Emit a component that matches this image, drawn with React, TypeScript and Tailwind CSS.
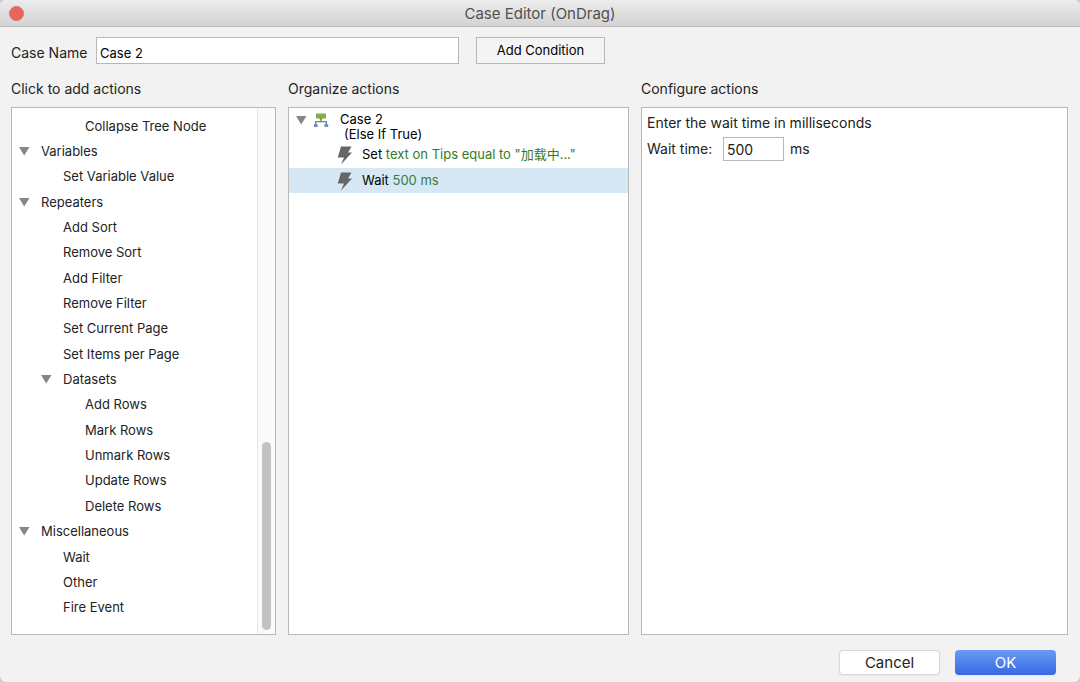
import { useState } from "react";

type Row = { label: string; level: 0 | 1 | 2; group?: boolean };

const rows: Row[] = [
  { label: "Collapse Tree Node", level: 2 },
  { label: "Variables", level: 0, group: true },
  { label: "Set Variable Value", level: 1 },
  { label: "Repeaters", level: 0, group: true },
  { label: "Add Sort", level: 1 },
  { label: "Remove Sort", level: 1 },
  { label: "Add Filter", level: 1 },
  { label: "Remove Filter", level: 1 },
  { label: "Set Current Page", level: 1 },
  { label: "Set Items per Page", level: 1 },
  { label: "Datasets", level: 1, group: true },
  { label: "Add Rows", level: 2 },
  { label: "Mark Rows", level: 2 },
  { label: "Unmark Rows", level: 2 },
  { label: "Update Rows", level: 2 },
  { label: "Delete Rows", level: 2 },
  { label: "Miscellaneous", level: 0, group: true },
  { label: "Wait", level: 1 },
  { label: "Other", level: 1 },
  { label: "Fire Event", level: 1 },
];

const indent = { 0: "pl-[7px]", 1: "pl-[29px]", 2: "pl-[51px]" };

function Triangle() {
  return (
    <svg viewBox="0 0 11 10" className="h-[10px] w-[11px] shrink-0" aria-hidden="true">
      <path d="M0 1H10.5L5.2 9.5Z" fill="#868686" />
    </svg>
  );
}

function CaseIcon() {
  return (
    <svg viewBox="0 0 16 15" className="h-[15px] w-4 shrink-0" aria-hidden="true">
      <path d="M3 0.5H13V5.5H10L8 7.5L6 5.5H3Z" fill="#86ad4e" />
      <path d="M8 6V8.5M2.7 12V8.7H13.3V12" fill="none" stroke="#748088" strokeWidth="1.3" />
      <rect x="0.8" y="11.2" width="3.8" height="2.8" fill="#688dbd" />
      <rect x="11.4" y="11.2" width="3.8" height="2.8" fill="#688dbd" />
    </svg>
  );
}

function Bolt() {
  return (
    <svg viewBox="0 0 16 20" className="h-5 w-4 shrink-0" aria-hidden="true">
      <path d="M4 1.5H14.5L11 7.5H15L4 19.5L7 12.5H0.8Z" fill="#666666" />
    </svg>
  );
}

function ActionTree() {
  return (
    <div className="flex min-h-0 border border-[#b8b8b8] bg-white">
      <ul className="flex flex-1 flex-col pt-[5px] pb-[14px]">
        {rows.map((row) => (
          <li key={row.label} className="flex min-h-0 flex-1">
            <button
              type="button"
              className={`flex w-full items-center gap-[11px] text-left text-[13px] leading-5 ${indent[row.level]}`}
            >
              {row.group ? <Triangle /> : <span className="w-[11px]" />}
              {row.label}
            </button>
          </li>
        ))}
      </ul>
      <div className="flex w-[18px] flex-col items-center justify-end border-l border-[#e6e6e6] bg-[#fafafa] pb-1">
        <div className="h-[36%] w-[9px] rounded-full bg-[#c2c2c2]" />
      </div>
    </div>
  );
}

function CaseTree() {
  return (
    <div className="border border-[#b8b8b8] bg-white pt-1 text-[13px] text-black">
      <div className="flex pl-[7px] leading-[15px]">
        <div className="pt-[3px]">
          <Triangle />
        </div>
        <div className="ml-[6px] pt-px">
          <CaseIcon />
        </div>
        <div className="ml-[11px]">
          <div>Case 2</div>
          <div className="pl-1">(Else If True)</div>
        </div>
      </div>
      <button type="button" className="flex h-[26px] w-full items-center gap-[9px] pl-12 text-left">
        <Bolt />
        <span>
          Set <span className="text-[#367a28]">text on Tips equal to "加载中..."</span>
        </span>
      </button>
      <button type="button" className="flex h-[25px] w-full items-center gap-[9px] bg-[#d6e8f3] pl-12 text-left">
        <Bolt />
        <span>
          Wait <span className="text-[#367a48]">500 ms</span>
        </span>
      </button>
    </div>
  );
}

export default function App() {
  const [name, setName] = useState("Case 2");
  const [wait, setWait] = useState("500");

  return (
    <div className="flex min-h-screen flex-col bg-[#c8cac8] font-[Inter,'Noto_Sans_CJK_SC',sans-serif] text-[#222]">
      <div className="flex flex-1 flex-col overflow-hidden rounded-md bg-[#f2f2f2]">
        <header className="relative flex h-[27px] items-center justify-center border-b border-[#bdbdbd] bg-linear-to-b from-[#ececec] to-[#d3d3d3] pt-px">
          <button
            type="button"
            aria-label="Close"
            className="absolute left-[9px] size-[15px] rounded-full border border-[#c9756d] bg-[#ea655b]"
          />
          <h1 className="text-[15px] leading-5 text-[#505050]">Case Editor (OnDrag)</h1>
        </header>

        <main className="flex flex-1 flex-col pt-[10px] pr-3 pl-[11px]">
          <div className="flex items-center">
            <label htmlFor="case-name" className="w-[85px] pt-1 text-sm">
              Case Name
            </label>
            <input
              id="case-name"
              value={name}
              onChange={(e) => setName(e.target.value)}
              className="h-[27px] w-[363px] border border-[#b8b8b8] bg-white px-[3px] pt-1 text-[13px] text-black outline-none"
            />
            <button
              type="button"
              className="ml-[17px] h-[27px] w-[129px] border border-[#b8b8b8] bg-[#f4f4f4] text-[13px] text-black"
            >
              Add Condition
            </button>
          </div>

          <div className="mt-[15px] grid flex-1 grid-cols-[265fr_341fr_427fr] grid-rows-[20px_1fr] gap-x-3 gap-y-2">
            <h2 className="text-sm leading-5">Click to add actions</h2>
            <h2 className="text-sm leading-5">Organize actions</h2>
            <h2 className="text-sm leading-5">Configure actions</h2>
            <ActionTree />
            <CaseTree />
            <div className="border border-[#b8b8b8] bg-white px-[5px] pt-1 text-sm">
              <p className="leading-[22px]">Enter the wait time in milliseconds</p>
              <div className="mt-[3px] flex items-center">
                <label htmlFor="wait-time" className="w-[70px]">
                  Wait time:
                </label>
                <input
                  id="wait-time"
                  value={wait}
                  onChange={(e) => setWait(e.target.value)}
                  className="mx-[6px] h-6 w-[61px] border border-[#b8b8b8] bg-white px-[3px] text-sm outline-none"
                />
                <span>ms</span>
              </div>
            </div>
          </div>
        </main>

        <footer className="flex justify-end gap-[15px] px-6 pt-[15px] pb-[7px]">
          <button
            type="button"
            className="h-[25px] w-[101px] rounded-[4px] border border-[#d6d6d6] bg-white text-[15px] leading-5 shadow-xs"
          >
            Cancel
          </button>
          <button
            type="button"
            className="h-[25px] w-[101px] rounded-[4px] bg-linear-to-b from-[#6c9bf5] to-[#3767e4] text-[15px] leading-5 text-white shadow-xs"
          >
            OK
          </button>
        </footer>
      </div>
    </div>
  );
}
